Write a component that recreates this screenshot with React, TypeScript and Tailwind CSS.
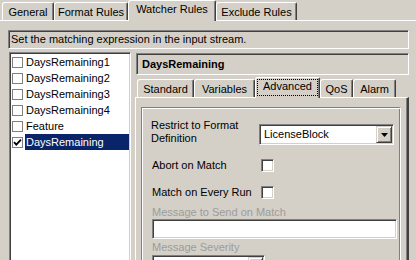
import React from "react";

const sunken =
  "border border-t-[#808080] border-l-[#808080] border-r-white border-b-white shadow-[inset_1px_1px_0_#404040,inset_-1px_-1px_0_#d4d0c8]";
const raised =
  "border border-t-[#d4d0c8] border-l-[#d4d0c8] border-r-[#404040] border-b-[#404040] shadow-[inset_1px_1px_0_#ffffff,inset_-1px_-1px_0_#808080]";

type TabDef = { label: string; w: string; selected?: boolean; focus?: boolean };

const topTabs: TabDef[] = [
  { label: "General", w: "w-[52px]" },
  { label: "Format Rules", w: "w-[74px]" },
  { label: "Watcher Rules", w: "w-[88px]", selected: true },
  { label: "Exclude Rules", w: "w-[81px]" },
];

const innerTabs: TabDef[] = [
  { label: "Standard", w: "w-[57px]" },
  { label: "Variables", w: "w-[61px]" },
  { label: "Advanced", w: "w-[65px]", selected: true, focus: true },
  { label: "QoS", w: "w-[33px]" },
  { label: "Alarm", w: "w-[43px]" },
];

function Tab({ t }: { t: TabDef }) {
  return (
    <div
      className={`${t.w} ${
        t.selected
          ? "relative z-10 h-[21px] -mb-px bg-[#d4d0c8] pb-[3px]"
          : "h-[18px] pt-[1px]"
      } flex shrink-0 items-center justify-center rounded-tl-[3px] rounded-tr-[2px] border-l border-t border-r border-l-white border-t-white border-r-[#404040] shadow-[inset_-1px_0_0_#808080]`}
    >
      <span className="leading-[13px]">{t.label}</span>
      {t.focus && (
        <div className="pointer-events-none absolute bottom-[2px] left-[1px] right-[1px] top-[1px] border border-dotted border-black" />
      )}
    </div>
  );
}

function DropArrow() {
  return (
    <svg width="7" height="4" viewBox="0 0 7 4">
      <polygon points="0,0 7,0 3.5,4" fill="#000" />
    </svg>
  );
}

function Select({ w, text, btnW }: { w: string; text?: string; btnW: string }) {
  return (
    <div className={`${w} ${sunken} flex h-[21px] items-center bg-white p-[1px]`}>
      <span className="flex-1 pl-[3px] leading-[13px]">{text}</span>
      <div className={`${raised} ${btnW} flex h-full items-center justify-center bg-[#d4d0c8]`}>
        <DropArrow />
      </div>
    </div>
  );
}

function CheckBox() {
  return <div className={`${sunken} h-[13px] w-[13px] bg-white`} />;
}

const items = ["DaysRemaining1", "DaysRemaining2", "DaysRemaining3", "DaysRemaining4", "Feature", "DaysRemaining"];

export default function App() {
  return (
    <div
      className="h-[260px] w-[416px] overflow-hidden bg-[#d4d0c8] text-[11px] text-black"
      style={{ fontFamily: '"Liberation Sans", Arial, sans-serif' }}
    >
      {/* top tabs */}
      <div className="flex h-[20px] items-end pl-[2px]">
        {topTabs.map((t) => (
          <Tab key={t.label} t={t} />
        ))}
      </div>

      <div className="h-[240px] border-t border-white pl-[8px] pt-[9px]">
        {/* description */}
        <div className={`${sunken} flex h-[19px] w-[401px] items-center pl-[2px]`}>
          <span className="leading-[13px]">Set the matching expression in the input stream.</span>
        </div>

        <div className="mt-[3px] flex items-start">
          {/* list */}
          <div className={`${sunken} ml-[1px] h-[220px] w-[122px] bg-white pl-[2px] pr-[1px] pt-[1px]`}>
            {items.map((it, i) => {
              const sel = i === items.length - 1;
              return (
                <div key={i} className="flex h-[16px] items-center">
                  <div className="flex h-[11px] w-[11px] shrink-0 items-center justify-center border border-[#808080] bg-white">
                    {sel && (
                      <svg width="9" height="9" viewBox="0 0 9 9">
                        <path d="M1 4.2 L3.3 6.6 L8 1.6" stroke="#000" strokeWidth="1.8" fill="none" />
                      </svg>
                    )}
                  </div>
                  <div
                    className={`ml-[2px] flex h-[16px] flex-1 items-center pl-[1px] ${
                      sel ? "bg-[#0a246a] text-white" : ""
                    }`}
                  >
                    <span className="leading-[13px]">{it}</span>
                  </div>
                </div>
              );
            })}
          </div>

          {/* right panel */}
          <div className="ml-[4px] w-[274px]">
            <div className={`${sunken} ml-[1px] mt-[1px] flex h-[22px] items-center pl-[5px]`}>
              <span className="font-bold leading-[13px]">DaysRemaining</span>
            </div>

            <div className="flex h-[22px] items-end pl-[2px]">
              {innerTabs.map((t) => (
                <Tab key={t.label} t={t} />
              ))}
            </div>

            <div className="h-[170px] border-l border-r-2 border-t border-l-white border-r-[#404040] border-t-white pl-[5px] pr-[6px] pt-[9px] shadow-[inset_-1px_0_0_#808080]">
              <div className="h-[160px] border-l border-r border-t border-l-[#808080] border-r-white border-t-[#808080] pl-[10px] pt-[11px] shadow-[inset_1px_1px_0_#ffffff,inset_-1px_0_0_#808080]">
                <div className="flex items-start">
                  <div className="-ml-[1px] w-[108px] leading-[13px]">
                    Restrict to Format
                    <br />
                    Definition
                  </div>
                  <div className="mt-[5px]">
                    <Select w="w-[135px]" text="LicenseBlock" btnW="w-[16px]" />
                  </div>
                </div>

                <div className="mt-[14px] flex items-center">
                  <div className="w-[109px] leading-[13px]">Abort on Match</div>
                  <CheckBox />
                </div>

                <div className="mt-[14px] flex items-center">
                  <div className="w-[109px] leading-[13px]">Match on Every Run</div>
                  <CheckBox />
                </div>

                <div className="mt-[7px] leading-[13px] text-[#9c9c9c]">Message to Send on Match</div>
                <div className={`${sunken} h-[20px] w-[245px] bg-white`} />

                <div className="mt-[2px] leading-[13px] text-[#9c9c9c]">Message Severity</div>
                <div className="mt-[1px]">
                  <Select w="w-[113px]" btnW="w-[15px]" />
                </div>
              </div>
            </div>
          </div>
        </div>
      </div>
    </div>
  );
}
